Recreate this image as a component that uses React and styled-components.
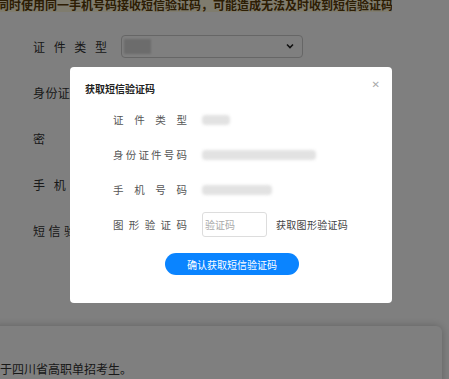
import React from "react";
import styled, { createGlobalStyle } from "styled-components";

const GlobalStyle = createGlobalStyle`
  html, body {
    margin: 0;
    padding: 0;
    background: #ffffff;
    overflow: hidden;
    font-family: "Noto Sans CJK SC", "Noto Sans", sans-serif;
  }
`;

const Page = styled.div`
  width: 449px;
  height: 379px;
  position: relative;
  overflow: hidden;
`;

const Notice = styled.div`
  width: 392px;
  height: 12px;
  background: #fff8dc;
  color: #5a3c08;
  font-size: 12px;
  font-weight: 700;
  line-height: 10px;
  white-space: nowrap;
  overflow: hidden;
  text-indent: -3px;
`;

const Form = styled.div`
  padding-top: 11px;
  display: flex;
  flex-direction: column;
`;

const FormRow = styled.div`
  height: 46px;
  display: flex;
  align-items: center;
  gap: 14px;
  padding-left: 33px;
`;

const FormLabel = styled.span`
  width: 74px;
  font-size: 12px;
  color: #333;
  text-align: justify;
  text-align-last: ${(p) => (p.$single ? "left" : "justify")};
  white-space: nowrap;
  overflow: hidden;
`;

const Select = styled.div`
  width: 182px;
  height: 23px;
  border: 1px solid #ccc;
  border-radius: 4px;
  display: flex;
  align-items: center;
  justify-content: space-between;
  padding: 0 8px 0 2px;
  box-sizing: border-box;
`;

const SelectBlur = styled.span`
  width: 27px;
  height: 15px;
  background: #d8d8d8;
  filter: blur(1px);
`;

const Card = styled.div`
  margin: 73px 7px 0 -10px;
  padding: 34px 0 0 10px;
  height: 60px;
  background: #fff;
  border-radius: 6px;
  box-shadow: 0 0 8px rgba(0, 0, 0, 0.25);
  font-size: 12px;
  color: #333;
`;

const Overlay = styled.div`
  position: fixed;
  inset: 0;
  background: rgba(0, 0, 0, 0.5);
`;

const Modal = styled.div`
  position: absolute;
  left: 70px;
  top: 67px;
  width: 322px;
  height: 236px;
  background: #fff;
  border-radius: 4px;
  box-sizing: border-box;
  padding: 15px 15px 0;
`;

const ModalHeader = styled.div`
  display: flex;
  justify-content: space-between;
  align-items: flex-start;
  height: 20px;
`;

const Title = styled.div`
  font-size: 10px;
  font-weight: 700;
  color: #222;
  line-height: 14px;
`;

const Close = styled.span`
  font-family: "DejaVu Sans", sans-serif;
  font-size: 10px;
  line-height: 10px;
  color: #aaa;
  margin-top: -2px;
  margin-right: -3px;
`;

const Rows = styled.div`
  margin-left: 28px;
  display: flex;
  flex-direction: column;
`;

const Row = styled.div`
  height: 35px;
  display: flex;
  align-items: center;
  gap: 15px;
`;

const Label = styled.span`
  width: 74px;
  font-size: 10.5px;
  color: #555;
  text-align: justify;
  text-align-last: justify;
  white-space: nowrap;
`;

const Blurred = styled.span`
  display: inline-block;
  width: ${(p) => p.$w}px;
  height: 10px;
  background: #e2e2e2;
  border-radius: 4px;
  filter: blur(1.5px);
`;

const CaptchaInput = styled.div`
  width: 65px;
  height: 25px;
  border: 1px solid #ddd;
  border-radius: 3px;
  box-sizing: border-box;
  font-size: 10px;
  color: #aaa;
  display: flex;
  align-items: center;
  padding-left: 2px;
`;

const CaptchaLink = styled.span`
  font-size: 10px;
  color: #444;
  margin-left: -6px;
  letter-spacing: 0.3px;
`;

const Actions = styled.div`
  display: flex;
  justify-content: center;
  margin-top: 11px;
  padding-left: 2px;
`;

const ConfirmButton = styled.button`
  width: 134px;
  height: 22px;
  border: none;
  border-radius: 11px;
  background: #0a84ff;
  color: #fff;
  font-family: inherit;
  font-size: 10px;
  padding: 0;
`;

function Chevron() {
  return (
    <svg width="8" height="6" viewBox="0 0 8 6">
      <path d="M1 1.5 L4 4.5 L7 1.5" fill="none" stroke="#222" strokeWidth="1.6" />
    </svg>
  );
}

export default function App() {
  return (
    <Page>
      <GlobalStyle />
      <Notice>同时使用同一手机号码接收短信验证码，可能造成无法及时收到短信验证码</Notice>
      <Form>
        <FormRow>
          <FormLabel>证件类型</FormLabel>
          <Select>
            <SelectBlur />
            <Chevron />
          </Select>
        </FormRow>
        <FormRow>
          <FormLabel>身份证件号码</FormLabel>
        </FormRow>
        <FormRow>
          <FormLabel $single>密</FormLabel>
        </FormRow>
        <FormRow>
          <FormLabel>手机号码</FormLabel>
        </FormRow>
        <FormRow>
          <FormLabel>短信验证码</FormLabel>
        </FormRow>
      </Form>
      <Card>于四川省高职单招考生。</Card>

      <Overlay />
      <Modal>
        <ModalHeader>
          <Title>获取短信验证码</Title>
          <Close>✕</Close>
        </ModalHeader>
        <Rows>
          <Row>
            <Label>证件类型</Label>
            <Blurred $w={28} />
          </Row>
          <Row>
            <Label>身份证件号码</Label>
            <Blurred $w={114} />
          </Row>
          <Row>
            <Label>手机号码</Label>
            <Blurred $w={70} />
          </Row>
          <Row>
            <Label>图形验证码</Label>
            <CaptchaInput>验证码</CaptchaInput>
            <CaptchaLink>获取图形验证码</CaptchaLink>
          </Row>
        </Rows>
        <Actions>
          <ConfirmButton>确认获取短信验证码</ConfirmButton>
        </Actions>
      </Modal>
    </Page>
  );
}
